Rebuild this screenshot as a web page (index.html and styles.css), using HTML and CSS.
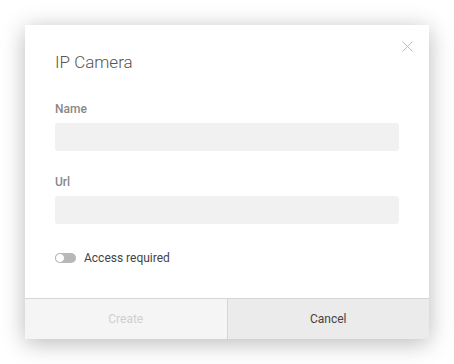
FILE: index.html
```html
<!DOCTYPE html>
<html lang="en">
<head>
  <meta charset="UTF-8">
  <meta name="viewport" content="width=device-width, initial-scale=1.0">
  <title>IP Camera</title>
  <link rel="stylesheet" href="styles.css">
</head>
<body>
  <div class="dialog">
    <!-- Kapat -->
    <button class="close-button" aria-label="Close">
      <svg width="11" height="11" viewBox="0 0 11 11">
        <path d="M0.5 0.5 L10.5 10.5 M10.5 0.5 L0.5 10.5" stroke="#bdbdbd" stroke-width="1" fill="none"/>
      </svg>
    </button>

    <div class="dialog-body">
      <h1 class="dialog-title">IP Camera</h1>

      <div class="field">
        <label for="name">Name</label>
        <input type="text" id="name" class="input">
      </div>

      <div class="field">
        <label for="url">Url</label>
        <input type="text" id="url" class="input">
      </div>

      <label class="toggle-row">
        <span class="toggle"><span class="knob"></span></span>
        <span class="toggle-label">Access required</span>
      </label>
    </div>

    <div class="dialog-footer">
      <button class="footer-button create" disabled>Create</button>
      <button class="footer-button cancel">Cancel</button>
    </div>
  </div>
</body>
</html>
```

FILE: styles.css
```css
body {
  margin: 0;
  padding: 25px;
  font-family: Roboto, "Liberation Sans", Arial, sans-serif;
  background-color: #fff;
}
.dialog {
  position: relative;
  width: 404px;
  height: 314px;
  background-color: #fff;
  box-shadow: 0 4px 22px rgba(0, 0, 0, 0.28);
  display: flex;
  flex-direction: column;
}
.close-button {
  position: absolute;
  top: 16px;
  right: 16px;
  width: 11px;
  height: 11px;
  padding: 0;
  border: none;
  background: none;
  cursor: pointer;
  display: flex;
}
.dialog-body {
  padding: 27px 30px 0;
  flex: 1;
}
.dialog-title {
  margin: 0 0 30px;
  font-size: 17px;
  line-height: 20px;
  font-weight: 300;
  color: #555;
}
.field {
  display: flex;
  flex-direction: column;
  margin-bottom: 24px;
}
.field label {
  font-size: 12px;
  line-height: 14px;
  font-weight: 500;
  color: #888;
  margin-bottom: 7px;
}
.input {
  height: 28px;
  border: none;
  border-radius: 3px;
  background-color: #f1f1f1;
  padding: 0 10px;
  font-family: inherit;
  font-size: 12px;
  outline: none;
}
.toggle-row {
  display: flex;
  align-items: center;
  gap: 8px;
  margin-top: 27px;
  cursor: pointer;
}
.toggle {
  position: relative;
  width: 21px;
  height: 10px;
  border-radius: 5px;
  background-color: #b8b8b8;
}
.knob {
  position: absolute;
  left: 0;
  top: 0;
  width: 8px;
  height: 8px;
  border-radius: 50%;
  background-color: #fff;
  border: 1px solid #b8b8b8;
}
.toggle-label {
  font-size: 12px;
  line-height: 14px;
  color: #444;
}
.dialog-footer {
  display: flex;
  border-top: 1px solid #d6d6d6;
}
.footer-button {
  flex: 1;
  height: 40px;
  border: none;
  font-family: inherit;
  font-size: 12px;
  cursor: pointer;
}
.create {
  background-color: #f5f5f5;
  color: #cfcfcf;
  border-right: 1px solid #d6d6d6;
  cursor: default;
}
.cancel {
  background-color: #ebebeb;
  color: #444;
}
```
